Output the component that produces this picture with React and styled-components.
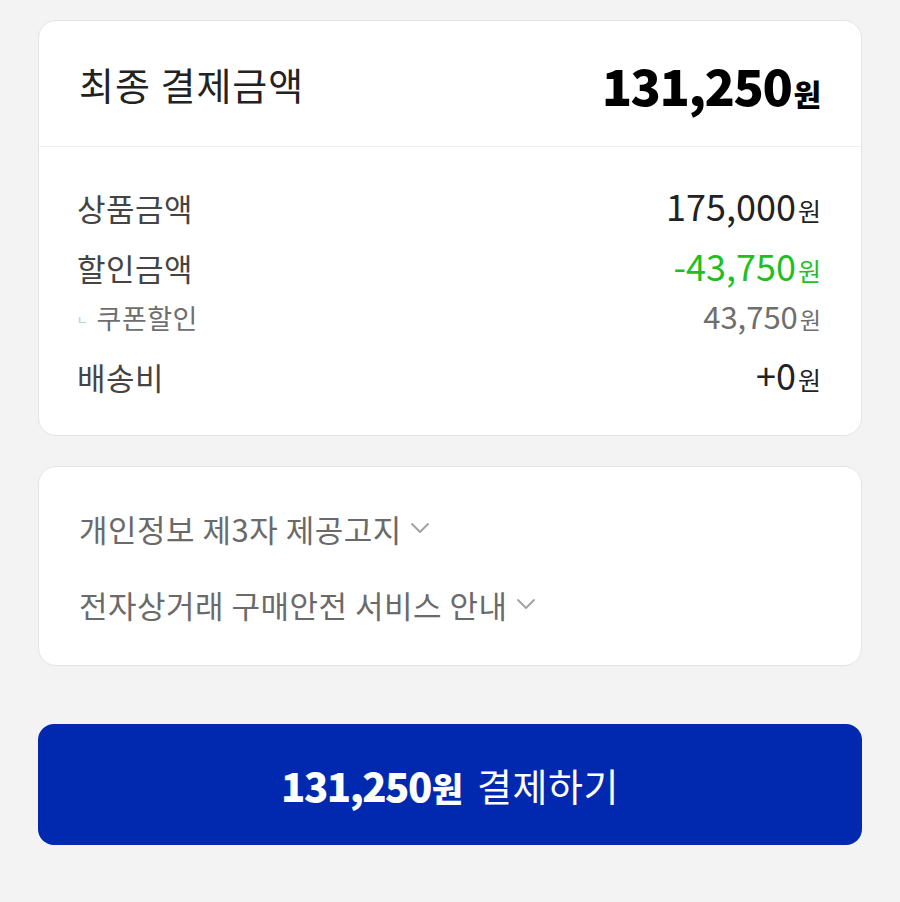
import React from "react";
import styled, { createGlobalStyle } from "styled-components";

const Global = createGlobalStyle`
  html, body { margin: 0; padding: 0; background: #f3f3f3; }
  body { font-family: "Noto Sans CJK KR", "Noto Sans", sans-serif; }
  * { box-sizing: border-box; }
`;

const Page = styled.div`
  width: 900px;
  min-height: 902px;
  padding: 20px 38px;
  display: flex;
  flex-direction: column;
  background: #f3f3f3;
`;

const Card = styled.section`
  background: #fff;
  border: 1px solid #e4e4e4;
  border-radius: 18px;
  overflow: hidden;
  margin-bottom: ${(p) => p.$mb || 0}px;
`;

const Header = styled.div`
  height: 126px;
  padding: 0 40px;
  display: flex;
  align-items: center;
  justify-content: space-between;
  border-bottom: 1px solid #efefef;
`;

const Title = styled.h2`
  margin: 0;
  font-size: 38px;
  font-weight: 400;
  color: #222;
  letter-spacing: 1px;
`;

const BigAmount = styled.div`
  font-size: 50px;
  font-weight: 800;
  color: #000;
  letter-spacing: -1.5px;
  display: flex;
  align-items: baseline;
  span { font-size: 30px; font-weight: 800; letter-spacing: 0; margin-left: 2px; }
`;

const Details = styled.div`
  padding: 30px 40px 29px 38px;
  display: flex;
  flex-direction: column;
`;

const Row = styled.div`
  height: ${(p) => (p.$sub ? 40 : 60)}px;
  margin-bottom: ${(p) => (p.$sub ? 9 : 0)}px;
  display: flex;
  align-items: center;
  justify-content: space-between;
`;

const Label = styled.div`
  font-size: ${(p) => (p.$sub ? 27 : 31)}px;
  letter-spacing: 0.5px;
  color: ${(p) => (p.$sub ? "#6e6e6e" : "#444")};
  display: flex;
  align-items: center;
`;

const SubMark = styled.span`
  font-size: 12px;
  color: #bdbdbd;
  margin-right: 8px;
  margin-top: 4px;
`;

const Value = styled.div`
  font-size: ${(p) => (p.$sub ? 31 : 36)}px;
  color: ${(p) => p.$color || "#222"};
  letter-spacing: 0;
  display: flex;
  align-items: baseline;
  margin-top: -4px;
  span {
    font-size: ${(p) => (p.$sub ? 23 : 25)}px;
    margin-left: 2px;
  }
`;

const Notices = styled.div`
  padding: 23px 40px 23px;
  display: flex;
  flex-direction: column;
`;

const Notice = styled.button`
  height: 76px;
  border: 0;
  background: none;
  padding: 0;
  display: flex;
  align-items: center;
  gap: 8px;
  font-family: inherit;
  font-size: 31px;
  letter-spacing: 0.5px;
  color: #6a6a6a;
  cursor: pointer;
  text-align: left;
`;

const PayButton = styled.button`
  margin-top: 58px;
  height: 121px;
  width: 100%;
  border: 0;
  border-radius: 16px;
  background: #0029b0;
  color: #fff;
  font-family: inherit;
  display: flex;
  align-items: center;
  justify-content: center;
  gap: 14px;
  cursor: pointer;
`;

const PayAmount = styled.span`
  font-size: 40px;
  font-weight: 800;
  letter-spacing: -1.5px;
  display: flex;
  align-items: baseline;
  span { font-size: 34px; letter-spacing: 0; margin-left: 1px; }
`;

const PayText = styled.span`
  font-size: 38px;
  font-weight: 400;
  letter-spacing: 0.5px;
`;

const Chevron = () => (
  <svg width="20" height="12" viewBox="0 0 20 12" fill="none">
    <path d="M2 2 L10 10 L18 2" stroke="#a0a0a0" strokeWidth="1.8" strokeLinecap="round" strokeLinejoin="round" />
  </svg>
);

export default function App() {
  return (
    <>
      <Global />
      <Page>
        <Card $mb={30}>
          <Header>
            <Title>최종 결제금액</Title>
            <BigAmount>131,250<span>원</span></BigAmount>
          </Header>
          <Details>
            <Row>
              <Label>상품금액</Label>
              <Value>175,000<span>원</span></Value>
            </Row>
            <Row>
              <Label>할인금액</Label>
              <Value $color="#1fbf1f">-43,750<span>원</span></Value>
            </Row>
            <Row $sub>
              <Label $sub><SubMark>ㄴ</SubMark>쿠폰할인</Label>
              <Value $sub $color="#6e6e6e">43,750<span>원</span></Value>
            </Row>
            <Row>
              <Label>배송비</Label>
              <Value>+0<span>원</span></Value>
            </Row>
          </Details>
        </Card>
        <Card>
          <Notices>
            <Notice>개인정보 제3자 제공고지<Chevron /></Notice>
            <Notice>전자상거래 구매안전 서비스 안내<Chevron /></Notice>
          </Notices>
        </Card>
        <PayButton>
          <PayAmount>131,250<span>원</span></PayAmount>
          <PayText>결제하기</PayText>
        </PayButton>
      </Page>
    </>
  );
}
